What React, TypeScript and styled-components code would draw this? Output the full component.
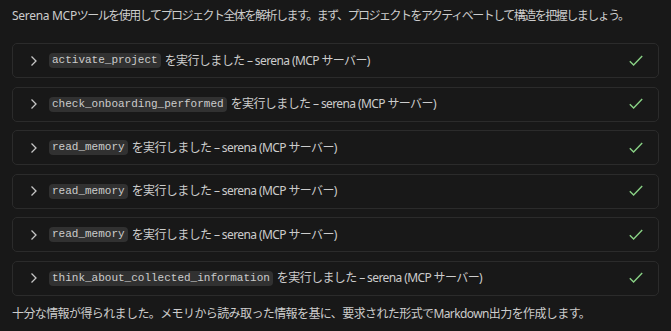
import styled, { createGlobalStyle } from "styled-components";

const GlobalStyle = createGlobalStyle`
    html, body {
        margin: 0;
        padding: 0;
        background: #181818;
    }
`;

const Page = styled.div`
    box-sizing: border-box;
    width: 671px;
    min-height: 331px;
    padding: 6px 12px 0 12px;
    background: #181818;
    color: #cccccc;
    font-family: "Segoe UI", "Noto Sans", "Noto Sans CJK JP", sans-serif;
    font-size: 12px;
    letter-spacing: -0.6px;
`;

const Paragraph = styled.p<{ $top?: number; $spacing?: number }>`
    margin: ${(p) => p.$top ?? 0}px 0 0 0;
    line-height: 20px;
    white-space: nowrap;
    letter-spacing: ${(p) => p.$spacing ?? -0.6}px;
`;

// latin words keep a looser spacing than the condensed Japanese run
const Latin = styled.span`
    letter-spacing: -0.3px;
`;

const ToolList = styled.div`
    display: flex;
    flex-direction: column;
    gap: 8.6px;
    margin-top: 17px;
`;

const ToolCard = styled.div`
    box-sizing: border-box;
    height: 35px;
    display: flex;
    align-items: center;
    padding: 0 14px 0 13px;
    border: 1px solid #2b2b2b;
    border-radius: 5px;
    background: #181818;
`;

const Chevron = styled.svg`
    flex: none;
    width: 16px;
    height: 16px;
    margin-right: 7px;
`;

const Label = styled.div`
    flex: 1;
    display: flex;
    align-items: center;
    gap: 4px;
    white-space: nowrap;
    line-height: 18px;
`;

const Code = styled.code`
    font-family: "Liberation Mono", "DejaVu Sans Mono", monospace;
    font-size: 11px;
    line-height: 15px;
    letter-spacing: 0;
    padding: 0 3px;
    border-radius: 4px;
    background: #313131;
    color: #cccccc;
`;

const Check = styled.svg`
    flex: none;
    width: 16px;
    height: 16px;
`;

const tools = [
    "activate_project",
    "check_onboarding_performed",
    "read_memory",
    "read_memory",
    "read_memory",
    "think_about_collected_information",
];

function ToolRow({ name }: { name: string }) {
    return (
        <ToolCard>
            <Chevron viewBox="0 0 16 16">
                <polyline
                    points="5.5,3.5 10,8 5.5,12.5"
                    fill="none"
                    stroke="#c5c5c5"
                    strokeWidth="1.3"
                />
            </Chevron>
            <Label>
                <Code>{name}</Code>
                <span>を実行しました – serena (MCP サーバー)</span>
            </Label>
            <Check viewBox="0 0 16 16">
                <polyline
                    points="1.8,8.3 5.6,12 14.2,3"
                    fill="none"
                    stroke="#89d185"
                    strokeWidth="1.4"
                />
            </Check>
        </ToolCard>
    );
}

export default function App() {
    return (
        <>
            <GlobalStyle />
            <Page>
                <Paragraph $spacing={-1.5}>
                    <Latin>Serena MCP</Latin>ツールを使用してプロジェクト全体を解析します。まず、プロジェクトをアクティベートして構造を把握しましょう。
                </Paragraph>
                <ToolList>
                    {tools.map((t, i) => (
                        <ToolRow key={i} name={t} />
                    ))}
                </ToolList>
                <Paragraph $top={8}>
                    十分な情報が得られました。メモリから読み取った情報を基に、要求された形式でMarkdown出力を作成します。
                </Paragraph>
            </Page>
        </>
    );
}
